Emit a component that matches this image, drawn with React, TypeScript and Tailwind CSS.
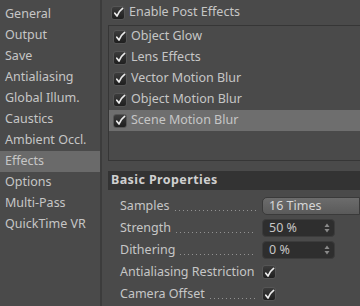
import React from 'react';

const sidebarItems = [
  'General',
  'Output',
  'Save',
  'Antialiasing',
  'Global Illum.',
  'Caustics',
  'Ambient Occl.',
  'Effects',
  'Options',
  'Multi-Pass',
  'QuickTime VR',
];

const effects = [
  'Object Glow',
  'Lens Effects',
  'Vector Motion Blur',
  'Object Motion Blur',
  'Scene Motion Blur',
];

const Check: React.FC = () => (
  <span className="w-[14px] h-[14px] shrink-0 rounded-[3px] bg-gradient-to-b from-[#3c3c3c] to-[#1f1f1f] border border-[#555] flex items-center justify-center">
    <svg width="11" height="11" viewBox="0 0 11 11">
      <path d="M1.8 6.2 L4 9 Q5.8 4.2 9.6 1.4" fill="none" stroke="#ececec" strokeWidth="1.7" strokeLinecap="round" strokeLinejoin="round" />
    </svg>
  </span>
);

const Spinner: React.FC = () => (
  <svg width="6" height="10" viewBox="0 0 6 10" className="mr-[4px]">
    <path d="M3 0.5 L5.5 4 L0.5 4 Z" fill="#8a8a8a" />
    <path d="M3 9.5 L5.5 6 L0.5 6 Z" fill="#8a8a8a" />
  </svg>
);

const Label: React.FC<{ text: string; dots?: boolean }> = ({ text, dots = true }) => (
  <div className="w-[142px] flex items-center shrink-0 pr-[6px]">
    <span className="whitespace-nowrap">{text}</span>
    {dots && (
      <span className="flex-1 ml-[5px] h-[1px] translate-y-[4px] bg-[linear-gradient(to_right,#929292_1px,transparent_1px)] bg-[length:4px_1px] bg-repeat-x" />
    )}
  </div>
);

export default function App() {
  return (
    <div
      className="w-[360px] h-[306px] bg-[#4a4a4a] text-[#c6c6c6] text-[12.5px] flex overflow-hidden"
      style={{ fontFamily: '"Noto Sans", "DejaVu Sans", sans-serif' }}
    >
      {/* Sidebar */}
      <div className="w-[102px] shrink-0 pt-[4px] border-r-2 border-[#3c3c3c]">
        {sidebarItems.map((item) => (
          <div
            key={item}
            className={`h-[21px] flex items-center pl-[5px] ${item === 'Effects' ? 'bg-[#6a6a6a]' : ''}`}
          >
            {item}
          </div>
        ))}
      </div>

      {/* Main */}
      <div className="flex-1 pl-[6px] min-w-0">
        <div className="h-[25px] flex items-center gap-[4px] pl-[3px]">
          <Check />
          <span>Enable Post Effects</span>
        </div>
        <div className="h-[136px] border-t border-l border-b border-[#363636]">
          {effects.map((e) => (
            <div
              key={e}
              className={`h-[21px] flex items-center gap-[4px] pl-[4px] ${e === 'Scene Motion Blur' ? 'bg-[#6e6e6e]' : ''}`}
            >
              <Check />
              <span>{e}</span>
            </div>
          ))}
        </div>

        <div className="mt-[10px] h-[19px] bg-[#333333] flex items-center pl-[3px] font-bold text-[#cfcfcf] tracking-[0.4px]">
          Basic Properties
        </div>

        <div className="pl-[12px] pt-[5px] flex flex-col">
          <div className="h-[22px] flex items-center">
            <Label text="Samples" />
            <div className="flex-1 h-[18px] rounded-l-[5px] bg-gradient-to-b from-[#6c6c6c] to-[#5a5a5a] border border-[#3a3a3a] flex items-center pl-[6px] text-[#d6d6d6]">
              16 Times
            </div>
          </div>
          <div className="h-[22px] flex items-center">
            <Label text="Strength" />
            <div className="w-[73px] h-[18px] rounded-[4px] bg-[#2e2e2e] border border-[#3c3c3c] flex items-center justify-between pl-[6px]">
              <span>50 %</span>
              <Spinner />
            </div>
          </div>
          <div className="h-[22px] flex items-center">
            <Label text="Dithering" />
            <div className="w-[73px] h-[18px] rounded-[4px] bg-[#2e2e2e] border border-[#3c3c3c] flex items-center justify-between pl-[6px]">
              <span>0 %</span>
              <Spinner />
            </div>
          </div>
          <div className="h-[22px] flex items-center">
            <Label text="Antialiasing Restriction" dots={false} />
            <Check />
          </div>
          <div className="h-[22px] flex items-center">
            <Label text="Camera Offset" />
            <Check />
          </div>
        </div>
      </div>
    </div>
  );
}
